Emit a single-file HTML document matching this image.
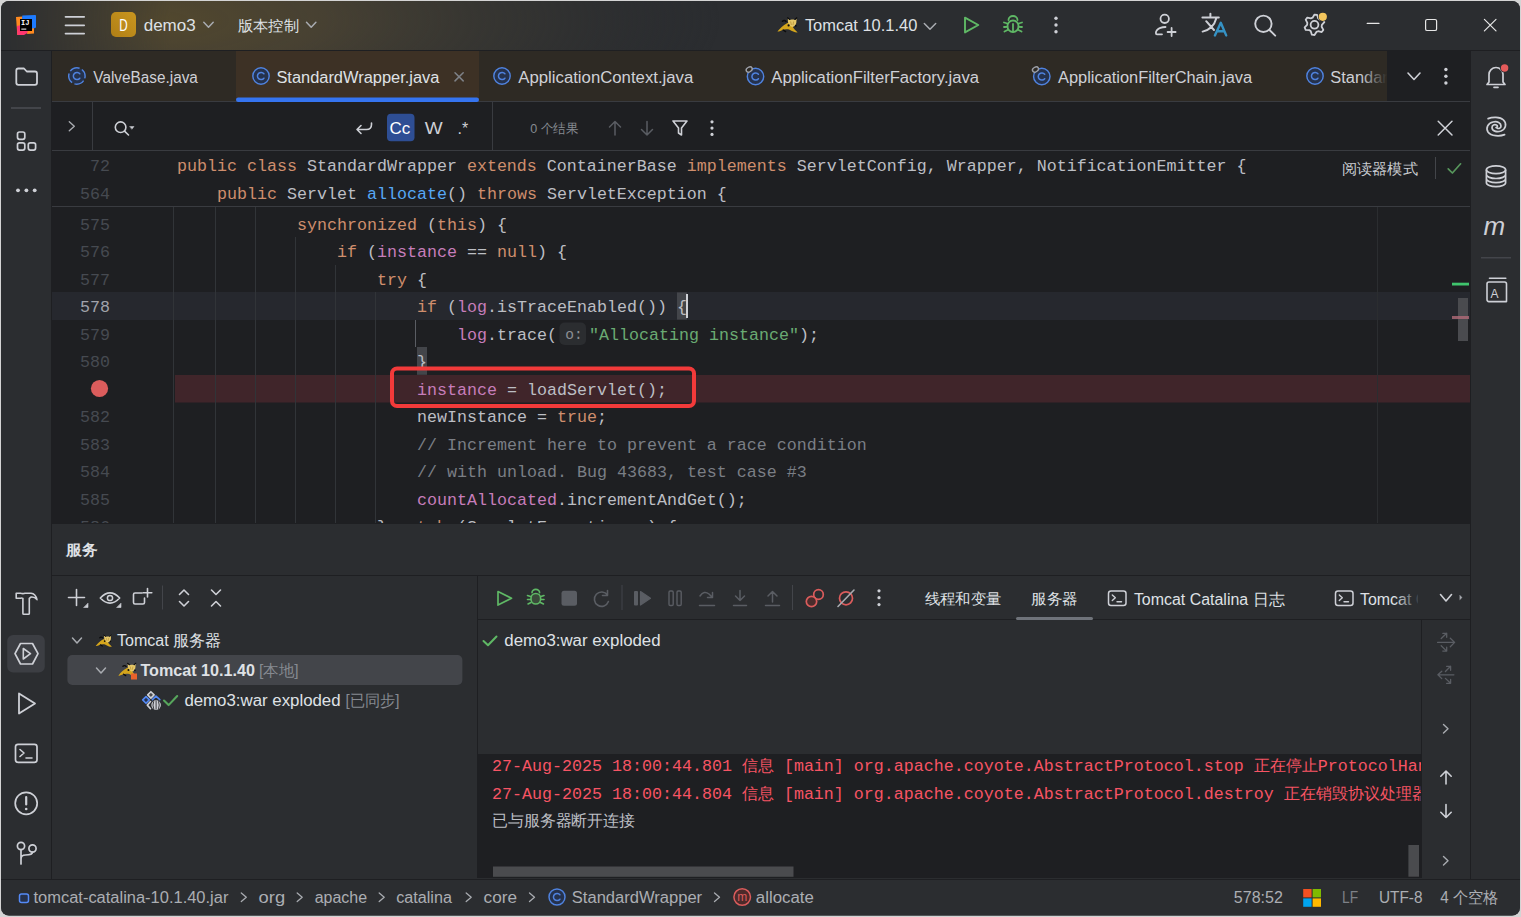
<!DOCTYPE html>
<html><head><meta charset="utf-8"><title>IntelliJ IDEA - StandardWrapper.java</title>
<style>html,body{margin:0;padding:0;background:#D4D4D4;overflow:hidden}svg{display:block}</style>
</head><body>
<svg width="1521" height="917" viewBox="0 0 1521 917">
<defs>
 <radialGradient id="proj" cx="160" cy="20" r="560" gradientUnits="userSpaceOnUse" gradientTransform="translate(160 20) scale(1 0.3) translate(-160 -20)">
  <stop offset="0" stop-color="#52482e" stop-opacity="1"/>
  <stop offset="0.3" stop-color="#4a4333" stop-opacity="0.9"/>
  <stop offset="0.65" stop-color="#3c3a33" stop-opacity="0.5"/>
  <stop offset="1" stop-color="#2B2D30" stop-opacity="0"/>
 </radialGradient>
 <linearGradient id="projmaskg" x1="0" y1="0" x2="170" y2="0" gradientUnits="userSpaceOnUse">
  <stop offset="0" stop-color="#fff" stop-opacity="0.05"/><stop offset="1" stop-color="#fff" stop-opacity="1"/>
 </linearGradient>
 <mask id="projmask" maskUnits="userSpaceOnUse" x="0" y="0" width="1521" height="50"><rect x="0" y="0" width="1521" height="50" fill="url(#projmaskg)"/></mask>
 <linearGradient id="dbadge" x1="0" y1="1" x2="1" y2="0">
  <stop offset="0" stop-color="#B07F16"/><stop offset="1" stop-color="#C9961F"/>
 </linearGradient>
 <linearGradient id="tabfade" x1="0" y1="0" x2="1" y2="0">
  <stop offset="0" stop-color="#2E2A24" stop-opacity="0"/><stop offset="1" stop-color="#2E2A24" stop-opacity="1"/>
 </linearGradient>
 <linearGradient id="tabfade2" x1="0" y1="0" x2="1" y2="0">
  <stop offset="0" stop-color="#2B2D30" stop-opacity="0"/><stop offset="1" stop-color="#2B2D30" stop-opacity="1"/>
 </linearGradient>
 <clipPath id="winclip"><rect x="1" y="1" width="1519" height="914.6" rx="8"/></clipPath>
 <clipPath id="edclip"><rect x="52" y="207" width="1418" height="316"/></clipPath>
 <clipPath id="conclip"><rect x="478" y="755" width="943" height="123"/></clipPath>
 <clipPath id="svtab"><rect x="1300" y="577" width="118" height="42"/></clipPath>
 <clipPath id="tabclip"><rect x="52" y="51" width="1335" height="50"/></clipPath>
</defs>
<g clip-path="url(#winclip)">
<rect x="0" y="0" width="1521" height="917" fill="#2B2D30" />
<rect x="0" y="0" width="1521" height="50" fill="#2B2D30" />
<rect x="0" y="0" width="1000" height="50" fill="url(#proj)" mask="url(#projmask)"/>
<rect x="0" y="50" width="1521" height="1" fill="#1E1F22" />
<rect x="51" y="51" width="1" height="864" fill="#1E1F22" />
<rect x="1470" y="51" width="1" height="828" fill="#1E1F22" />
<rect x="52" y="51" width="1418" height="50" fill="#2E2A24" />
<rect x="236" y="51" width="243" height="50" fill="#3D3125" />
<rect x="1387" y="51" width="83" height="50" fill="#1E1F22" />
<rect x="52" y="101" width="1418" height="1" fill="#393B40" />
<rect x="236" y="97.5" width="243" height="4.5" fill="#3574F0" rx="2.2" />
<rect x="52" y="102" width="1418" height="48" fill="#1E1F22" />
<rect x="52" y="150" width="1418" height="1" fill="#393B40" />
<rect x="92" y="102" width="1" height="48" fill="#393B40" />
<rect x="492" y="102" width="1" height="48" fill="#393B40" />
<rect x="52" y="151" width="1418" height="55" fill="#1E1F22" />
<rect x="52" y="206" width="1418" height="1" fill="#393B40" />
<rect x="52" y="207" width="1418" height="316" fill="#1E1F22" />
<g clip-path="url(#edclip)">
<rect x="52" y="292" width="1418" height="28" fill="#26282E" />
<rect x="175" y="375" width="1295" height="27.5" fill="#40252A" />
<rect x="1377" y="207" width="1" height="316" fill="#2B2D30" />
<rect x="173" y="207" width="1" height="316" fill="#313438" />
<rect x="215" y="207" width="1" height="316" fill="#313438" />
<rect x="255" y="207" width="1" height="316" fill="#313438" />
<rect x="295" y="237" width="1" height="286" fill="#313438" />
<rect x="335" y="265" width="1" height="258" fill="#313438" />
<rect x="375" y="292" width="1" height="231" fill="#313438" />
<rect x="415" y="320" width="1" height="27" fill="#5A5D63" />
</g>
<rect x="52" y="523" width="1418" height="1" fill="#1E1F22" />
<rect x="52" y="524" width="1418" height="354" fill="#2B2D30" />
<rect x="52" y="575" width="1418" height="1" fill="#1E1F22" />
<rect x="477" y="576" width="1" height="302" fill="#1E1F22" />
<rect x="478" y="619" width="992" height="1" fill="#1E1F22" />
<rect x="478" y="754" width="944" height="124" fill="#1E1F22" />
<rect x="1421" y="620" width="1" height="258" fill="#1E1F22" />
<rect x="0" y="879" width="1521" height="1" fill="#1E1F22" />
<rect x="0" y="880" width="1521" height="40" fill="#2B2D30" />
<rect x="111" y="12" width="25" height="25" fill="url(#dbadge)" rx="5" />
<text x="119.3" y="31.3" font-family="'Liberation Sans', sans-serif" font-size="16" fill="#FFFFFF" textLength="8.4" lengthAdjust="spacingAndGlyphs" >D</text>
<text x="143.7" y="30.7" font-family="'Liberation Sans', sans-serif" font-size="16" fill="#DFE1E5" textLength="52.0" lengthAdjust="spacingAndGlyphs" >demo3</text>
<text x="237.9" y="30.5" font-family="'Liberation Sans', sans-serif" font-size="15" fill="#DFE1E5" textLength="61.1" lengthAdjust="spacingAndGlyphs" >版本控制</text>
<text x="804.9" y="30.7" font-family="'Liberation Sans', sans-serif" font-size="16" fill="#DFE1E5" textLength="112.4" lengthAdjust="spacingAndGlyphs" >Tomcat 10.1.40</text>
<g clip-path="url(#tabclip)">
<text x="93.3" y="82.9" font-family="'Liberation Sans', sans-serif" font-size="16" fill="#CED0D6" textLength="104.6" lengthAdjust="spacingAndGlyphs" >ValveBase.java</text>
<text x="276.4" y="82.9" font-family="'Liberation Sans', sans-serif" font-size="16" fill="#DFE1E5" textLength="163.0" lengthAdjust="spacingAndGlyphs" >StandardWrapper.java</text>
<text x="518.3" y="82.9" font-family="'Liberation Sans', sans-serif" font-size="16" fill="#CED0D6" textLength="175.0" lengthAdjust="spacingAndGlyphs" >ApplicationContext.java</text>
<text x="771.3" y="82.9" font-family="'Liberation Sans', sans-serif" font-size="16" fill="#CED0D6" textLength="207.8" lengthAdjust="spacingAndGlyphs" >ApplicationFilterFactory.java</text>
<text x="1058" y="82.9" font-family="'Liberation Sans', sans-serif" font-size="16" fill="#CED0D6" textLength="194.1" lengthAdjust="spacingAndGlyphs" >ApplicationFilterChain.java</text>
<text x="1330.3" y="82.9" font-family="'Liberation Sans', sans-serif" font-size="16" fill="#CED0D6" textLength="163.0" lengthAdjust="spacingAndGlyphs" >StandardWrapper.java</text>
<rect x="1360" y="51" width="27" height="50" fill="url(#tabfade)" />
</g>
<text x="530.3" y="132.7" font-family="'Liberation Sans', sans-serif" font-size="13" fill="#868A91" textLength="48.1" lengthAdjust="spacingAndGlyphs" >0 个结果</text>
<rect x="387" y="113.7" width="27.5" height="27.5" fill="#2E4E94" rx="4" />
<text x="389.5" y="133.5" font-family="'Liberation Sans', sans-serif" font-size="17" fill="#FFFFFF" >Cc</text>
<text x="424.7" y="133.9" font-family="'Liberation Sans', sans-serif" font-size="16" fill="#CED0D6" textLength="17.9" lengthAdjust="spacingAndGlyphs" >W</text>
<text x="457.5" y="134" font-family="'Liberation Sans', sans-serif" font-size="16" fill="#CED0D6" >.*</text>
<text x="110" y="170.5" font-family="'Liberation Mono', monospace" font-size="16.667" fill="#464A51" text-anchor="end" >72</text>
<text x="177" y="170.5" font-family="'Liberation Mono', monospace" font-size="16.667" xml:space="preserve" ><tspan fill="#CF8E6D">public</tspan><tspan fill="#BCBEC4"> </tspan><tspan fill="#CF8E6D">class</tspan><tspan fill="#BCBEC4"> StandardWrapper </tspan><tspan fill="#CF8E6D">extends</tspan><tspan fill="#BCBEC4"> ContainerBase </tspan><tspan fill="#CF8E6D">implements</tspan><tspan fill="#BCBEC4"> ServletConfig, Wrapper, NotificationEmitter {</tspan></text>
<text x="110" y="198.6" font-family="'Liberation Mono', monospace" font-size="16.667" fill="#464A51" text-anchor="end" >564</text>
<text x="217" y="198.6" font-family="'Liberation Mono', monospace" font-size="16.667" xml:space="preserve" ><tspan fill="#CF8E6D">public</tspan><tspan fill="#BCBEC4"> Servlet </tspan><tspan fill="#56A8F5">allocate</tspan><tspan fill="#BCBEC4">() </tspan><tspan fill="#CF8E6D">throws</tspan><tspan fill="#BCBEC4"> ServletException {</tspan></text>
<text x="1341.8" y="174" font-family="'Liberation Sans', sans-serif" font-size="15" fill="#C9CCD1" textLength="76.0" lengthAdjust="spacingAndGlyphs" >阅读器模式</text>
<rect x="1435" y="157" width="1" height="22" fill="#43454A" />
<g clip-path="url(#edclip)">
<text x="110" y="229.8" font-family="'Liberation Mono', monospace" font-size="16.667" fill="#464A51" text-anchor="end" >575</text>
<text x="297" y="229.8" font-family="'Liberation Mono', monospace" font-size="16.667" xml:space="preserve" ><tspan fill="#CF8E6D">synchronized</tspan><tspan fill="#BCBEC4"> (</tspan><tspan fill="#CF8E6D">this</tspan><tspan fill="#BCBEC4">) {</tspan></text>
<text x="110" y="257.3" font-family="'Liberation Mono', monospace" font-size="16.667" fill="#464A51" text-anchor="end" >576</text>
<text x="337" y="257.3" font-family="'Liberation Mono', monospace" font-size="16.667" xml:space="preserve" ><tspan fill="#CF8E6D">if</tspan><tspan fill="#BCBEC4"> (</tspan><tspan fill="#C77DBB">instance</tspan><tspan fill="#BCBEC4"> == </tspan><tspan fill="#CF8E6D">null</tspan><tspan fill="#BCBEC4">) {</tspan></text>
<text x="110" y="284.8" font-family="'Liberation Mono', monospace" font-size="16.667" fill="#464A51" text-anchor="end" >577</text>
<text x="377" y="284.8" font-family="'Liberation Mono', monospace" font-size="16.667" xml:space="preserve" ><tspan fill="#CF8E6D">try</tspan><tspan fill="#BCBEC4"> {</tspan></text>
<text x="110" y="312.3" font-family="'Liberation Mono', monospace" font-size="16.667" fill="#A1A3AB" text-anchor="end" >578</text>
<text x="417" y="312.3" font-family="'Liberation Mono', monospace" font-size="16.667" xml:space="preserve" ><tspan fill="#CF8E6D">if</tspan><tspan fill="#BCBEC4"> (</tspan><tspan fill="#C77DBB">log</tspan><tspan fill="#BCBEC4">.isTraceEnabled()) {</tspan></text>
<text x="110" y="339.8" font-family="'Liberation Mono', monospace" font-size="16.667" fill="#464A51" text-anchor="end" >579</text>
<text x="457" y="339.8" font-family="'Liberation Mono', monospace" font-size="16.667" xml:space="preserve" ><tspan fill="#C77DBB">log</tspan><tspan fill="#BCBEC4">.trace(</tspan></text>
<text x="110" y="367.3" font-family="'Liberation Mono', monospace" font-size="16.667" fill="#464A51" text-anchor="end" >580</text>
<text x="417" y="367.3" font-family="'Liberation Mono', monospace" font-size="16.667" xml:space="preserve" ><tspan fill="#BCBEC4">}</tspan></text>
<text x="417" y="394.8" font-family="'Liberation Mono', monospace" font-size="16.667" xml:space="preserve" ><tspan fill="#C77DBB">instance</tspan><tspan fill="#BCBEC4"> = loadServlet();</tspan></text>
<text x="110" y="422.3" font-family="'Liberation Mono', monospace" font-size="16.667" fill="#464A51" text-anchor="end" >582</text>
<text x="417" y="422.3" font-family="'Liberation Mono', monospace" font-size="16.667" xml:space="preserve" ><tspan fill="#BCBEC4">newInstance = </tspan><tspan fill="#CF8E6D">true</tspan><tspan fill="#BCBEC4">;</tspan></text>
<text x="110" y="449.8" font-family="'Liberation Mono', monospace" font-size="16.667" fill="#464A51" text-anchor="end" >583</text>
<text x="417" y="449.8" font-family="'Liberation Mono', monospace" font-size="16.667" xml:space="preserve" ><tspan fill="#7A7E85">// Increment here to prevent a race condition</tspan></text>
<text x="110" y="477.3" font-family="'Liberation Mono', monospace" font-size="16.667" fill="#464A51" text-anchor="end" >584</text>
<text x="417" y="477.3" font-family="'Liberation Mono', monospace" font-size="16.667" xml:space="preserve" ><tspan fill="#7A7E85">// with unload. Bug 43683, test case #3</tspan></text>
<text x="110" y="504.8" font-family="'Liberation Mono', monospace" font-size="16.667" fill="#464A51" text-anchor="end" >585</text>
<text x="417" y="504.8" font-family="'Liberation Mono', monospace" font-size="16.667" xml:space="preserve" ><tspan fill="#C77DBB">countAllocated</tspan><tspan fill="#BCBEC4">.incrementAndGet();</tspan></text>
<text x="110" y="532.3" font-family="'Liberation Mono', monospace" font-size="16.667" fill="#464A51" text-anchor="end" >586</text>
<text x="377" y="532.3" font-family="'Liberation Mono', monospace" font-size="16.667" xml:space="preserve" ><tspan fill="#BCBEC4">} </tspan><tspan fill="#CF8E6D">catch</tspan><tspan fill="#BCBEC4"> (ServletException e) {</tspan></text>
<rect x="677" y="292.4" width="10" height="27.2" fill="#43454A" />
<rect x="417" y="347" width="10" height="27.8" fill="#43454A" />
</g>
<text x="677" y="312.3" font-family="'Liberation Mono', monospace" font-size="16.667" xml:space="preserve" ><tspan fill="#BCBEC4">{</tspan></text>
<text x="417" y="367.3" font-family="'Liberation Mono', monospace" font-size="16.667" xml:space="preserve" ><tspan fill="#BCBEC4">}</tspan></text>
<rect x="686" y="294" width="2" height="24" fill="#CED0D6" />
<rect x="559.5" y="322.5" width="26.5" height="22.5" fill="#2B2D30" rx="5" />
<text x="565.2" y="339" font-family="'Liberation Mono', monospace" font-size="14.5" fill="#8C8F94" >o:</text>
<text x="589" y="339.8" font-family="'Liberation Mono', monospace" font-size="16.667" xml:space="preserve" ><tspan fill="#6AAB73">"Allocating instance"</tspan><tspan fill="#BCBEC4">);</tspan></text>
<circle cx="99.5" cy="388.5" r="8.6" fill="#DB5C5C" stroke="none" stroke-width="1.5" />
<rect x="392" y="368.5" width="302" height="37.5" rx="5" fill="none" stroke="#F23A3A" stroke-width="4"/>
<rect x="1452" y="282.7" width="17" height="2.8" fill="#3FC46D" />
<rect x="1458" y="298" width="10" height="43" fill="#4A4B4F" />
<rect x="1452" y="316" width="17" height="3" fill="#B06A78" opacity="0.8"/>
<text x="66.1" y="554.8" font-family="'Liberation Sans', sans-serif" font-size="15" fill="#DFE1E5" font-weight="700" textLength="31.2" lengthAdjust="spacingAndGlyphs" >服务</text>
<text x="117" y="646.2" font-family="'Liberation Sans', sans-serif" font-size="16" fill="#DFE1E5" textLength="104.3" lengthAdjust="spacingAndGlyphs" >Tomcat 服务器</text>
<rect x="67.4" y="655" width="395" height="30" fill="#43454A" rx="5" />
<text x="140.4" y="675.5" font-family="'Liberation Sans', sans-serif" font-size="16" fill="#DFE1E5" font-weight="700" textLength="114.6" lengthAdjust="spacingAndGlyphs" >Tomcat 10.1.40</text>
<text x="259" y="675.5" font-family="'Liberation Sans', sans-serif" font-size="16" fill="#868A91" textLength="39.6" lengthAdjust="spacingAndGlyphs" >[本地]</text>
<text x="184.4" y="705.6" font-family="'Liberation Sans', sans-serif" font-size="16" fill="#DFE1E5" textLength="156.2" lengthAdjust="spacingAndGlyphs" >demo3:war exploded</text>
<text x="345.4" y="705.6" font-family="'Liberation Sans', sans-serif" font-size="16" fill="#868A91" textLength="54.0" lengthAdjust="spacingAndGlyphs" >[已同步]</text>
<text x="504.3" y="646.2" font-family="'Liberation Sans', sans-serif" font-size="16" fill="#DFE1E5" textLength="156.3" lengthAdjust="spacingAndGlyphs" >demo3:war exploded</text>
<text x="924.7" y="604" font-family="'Liberation Sans', sans-serif" font-size="15" fill="#DFE1E5" textLength="76.9" lengthAdjust="spacingAndGlyphs" >线程和变量</text>
<text x="1031" y="604" font-family="'Liberation Sans', sans-serif" font-size="15" fill="#DFE1E5" textLength="46.6" lengthAdjust="spacingAndGlyphs" >服务器</text>
<rect x="1016" y="617" width="77" height="3" fill="#6F737A" rx="1.5" />
<text x="1133.9" y="604.5" font-family="'Liberation Sans', sans-serif" font-size="16" fill="#DFE1E5" textLength="150.6" lengthAdjust="spacingAndGlyphs" >Tomcat Catalina 日志</text>
<g clip-path="url(#svtab)">
<text x="1360" y="604.5" font-family="'Liberation Sans', sans-serif" font-size="16" fill="#DFE1E5" textLength="150.6" lengthAdjust="spacingAndGlyphs" >Tomcat Catalina 日志</text>
</g>
<rect x="1395" y="577" width="26" height="42" fill="url(#tabfade2)" />
<rect x="1421" y="577" width="49" height="42" fill="#2B2D30" />
<g clip-path="url(#conclip)">
<text x="492" y="771" font-family="'Liberation Mono', monospace" font-size="16.667" fill="#F75464" xml:space="preserve">27-Aug-2025 18:00:44.801 <tspan font-size="16.25">信息</tspan> [main] org.apache.coyote.AbstractProtocol.stop <tspan font-size="16.25">正在停止</tspan>ProtocolHandler</text>
<text x="492" y="798.5" font-family="'Liberation Mono', monospace" font-size="16.667" fill="#F75464" xml:space="preserve">27-Aug-2025 18:00:44.804 <tspan font-size="16.25">信息</tspan> [main] org.apache.coyote.AbstractProtocol.destroy <tspan font-size="16.25">正在销毁协议处理器</tspan></text>
<text x="492" y="826" font-family="'Liberation Mono', monospace" font-size="16" fill="#BCBEC4" textLength="143" lengthAdjust="spacing" >已与服务器断开连接</text>
<rect x="493" y="866.5" width="300.5" height="10.3" fill="#4A4B4E" />
<rect x="1408.4" y="845" width="10.6" height="31.7" fill="#4A4B4E" />
</g>
<text x="33.5" y="902.6" font-family="'Liberation Sans', sans-serif" font-size="16" fill="#ABAEB3" textLength="194.9" lengthAdjust="spacingAndGlyphs" >tomcat-catalina-10.1.40.jar</text>
<text x="258.6" y="902.6" font-family="'Liberation Sans', sans-serif" font-size="16" fill="#ABAEB3" textLength="26.5" lengthAdjust="spacingAndGlyphs" >org</text>
<text x="314.7" y="902.6" font-family="'Liberation Sans', sans-serif" font-size="16" fill="#ABAEB3" textLength="52.4" lengthAdjust="spacingAndGlyphs" >apache</text>
<text x="396.2" y="902.6" font-family="'Liberation Sans', sans-serif" font-size="16" fill="#ABAEB3" textLength="55.7" lengthAdjust="spacingAndGlyphs" >catalina</text>
<text x="483.6" y="902.6" font-family="'Liberation Sans', sans-serif" font-size="16" fill="#ABAEB3" textLength="33.4" lengthAdjust="spacingAndGlyphs" >core</text>
<text x="571.8" y="902.6" font-family="'Liberation Sans', sans-serif" font-size="16" fill="#ABAEB3" textLength="130.3" lengthAdjust="spacingAndGlyphs" >StandardWrapper</text>
<text x="755.8" y="902.6" font-family="'Liberation Sans', sans-serif" font-size="16" fill="#ABAEB3" textLength="58.0" lengthAdjust="spacingAndGlyphs" >allocate</text>
<text x="1233.8" y="902.7" font-family="'Liberation Sans', sans-serif" font-size="16" fill="#ABAEB3" textLength="49.1" lengthAdjust="spacingAndGlyphs" >578:52</text>
<text x="1342" y="902.7" font-family="'Liberation Sans', sans-serif" font-size="16" fill="#7E8187" textLength="16.1" lengthAdjust="spacingAndGlyphs" >LF</text>
<text x="1379" y="902.7" font-family="'Liberation Sans', sans-serif" font-size="16" fill="#ABAEB3" textLength="43.5" lengthAdjust="spacingAndGlyphs" >UTF-8</text>
<text x="1440.3" y="902.7" font-family="'Liberation Sans', sans-serif" font-size="16" fill="#ABAEB3" textLength="58.3" lengthAdjust="spacingAndGlyphs" >4 个空格</text>
<g><path d="M16 17 L22.5 16.5 L22 34.5 L17.3 35 Z" fill="#FF8A1F"/><path d="M22.3 15.5 L35.2 14.9 Q36 14.9 36 15.8 L36 27.5 L29.5 30.5 L22 22 Z" fill="#1E7BFF"/><path d="M17.3 35 L17 26 L26 24 L31 31 L24 35 Z" fill="#FF3670"/><path d="M28 30 L34 28 L34 33.5 L27 34 Z" fill="#FF8A1F"/><rect x="20" y="19" width="12" height="12" fill="#000"/><text x="21" y="25.2" font-family="'Liberation Mono', monospace" font-size="7" font-weight="700" fill="#fff">IJ</text><rect x="21.3" y="28.6" width="5" height="1" fill="#fff"/></g>
<path d="M65.5 16.8 L84.2 16.8" stroke="#CED0D6" stroke-width="1.7" fill="none" stroke-linecap="round" stroke-linejoin="round" />
<path d="M65.5 25.3 L84.2 25.3" stroke="#CED0D6" stroke-width="1.7" fill="none" stroke-linecap="round" stroke-linejoin="round" />
<path d="M65.5 33.6 L84.2 33.6" stroke="#CED0D6" stroke-width="1.7" fill="none" stroke-linecap="round" stroke-linejoin="round" />
<path d="M203.8 22.3 L208.5 27.3 L213.2 22.3" stroke="#A8ABB0" stroke-width="1.5" fill="none" stroke-linecap="round" stroke-linejoin="round" />
<path d="M306.5 22.3 L311.2 27.3 L315.9 22.3" stroke="#A8ABB0" stroke-width="1.5" fill="none" stroke-linecap="round" stroke-linejoin="round" />
<g transform="translate(774 14) scale(1.0)"><path d="M8.5 7.2 C9.5 6.2 11 6.2 12 7.4" stroke="#0c0c0c" stroke-width="1.6" fill="none" stroke-linecap="round"/><path d="M3.4 17.6 C6 14.2 9 11.2 13 9.2 C15.5 8.3 17.2 10.2 18.3 12.3 C19.8 14.8 21.8 16.8 23.6 18.4 C21 18.6 18 17.3 15.6 15.8 C13 15 10.2 15.4 8 16.2 C6.4 16.8 5 17.6 3.4 17.6 Z" fill="#D4A51C"/><path d="M9.2 16 L11.6 17.6" stroke="#0c0c0c" stroke-width="1.4" fill="none" stroke-linecap="round"/><path d="M13.8 4.4 L15.6 6 L17.6 5.6 L19.6 5.6 L21.2 6 L22.6 4.4 L22.3 9 C21.6 11.6 19.6 13.1 18.3 13.1 C16.6 12.6 14.6 10.6 14 8.2 Z" fill="#E6C868"/><path d="M13.6 3.8 L15.6 5.4 M22.8 3.8 L21 5.4" stroke="#0c0c0c" stroke-width="1.2" stroke-linecap="round"/><circle cx="14.6" cy="11.4" r="1.1" fill="#0c0c0c"/><circle cx="21.8" cy="11.8" r="0.9" fill="#0c0c0c"/><path d="M16.6 7.5 L17.4 11 M19.6 7.5 L19 11" stroke="#B89338" stroke-width="0.8"/></g>
<path d="M924.3 23.5 L930.0 29.2 L935.7 23.5" stroke="#A8ABB0" stroke-width="1.5" fill="none" stroke-linecap="round" stroke-linejoin="round" />
<path d="M965 17.6 L978.3 25 L965 32.4 Z" stroke="#5FB865" stroke-width="1.9" fill="none" stroke-linecap="round" stroke-linejoin="round" />
<g stroke="#5FB865" stroke-width="1.8" fill="none" stroke-linecap="round"><path d="M1008.5 20 A4.5 4 0 0 1 1017.5 20"/><rect x="1007.5" y="20.5" width="11" height="11.5" rx="5.5"/><path d="M1004 22.5 L1007.5 23.5 M1004 27 L1007.5 26.8 M1004.5 31.5 L1008 29.7 M1022 22.5 L1018.5 23.5 M1022 27 L1018.5 26.8 M1021.5 31.5 L1018 29.7 M1013 24 L1013 31.5"/></g>
<circle cx="1056" cy="18.3" r="1.7" fill="#CED0D6" stroke="none" stroke-width="1.5" />
<circle cx="1056" cy="25" r="1.7" fill="#CED0D6" stroke="none" stroke-width="1.5" />
<circle cx="1056" cy="31.7" r="1.7" fill="#CED0D6" stroke="none" stroke-width="1.5" />
<circle cx="1164.7" cy="18.8" r="4.2" fill="none" stroke="#CED0D6" stroke-width="1.8" />
<path d="M1157 34.3 L1162 34.3 M1157 34.3 C1155.5 34.3 1155.5 32 1157 30.2 C1158.8 28 1161.5 27 1165.5 27" stroke="#CED0D6" stroke-width="1.8" fill="none" stroke-linecap="round" stroke-linejoin="round" />
<path d="M1171.6 28 L1171.6 36 M1167.6 32 L1175.6 32" stroke="#CED0D6" stroke-width="1.8" fill="none" stroke-linecap="round" stroke-linejoin="round" />
<path d="M1210.4 13.8 L1210.4 16 M1202.4 17.5 L1218.8 17.5 M1206.2 21.2 L1214 30 M1216.3 18.2 C1214.5 25 1210 29.8 1202.6 31.6" stroke="#CED0D6" stroke-width="2" fill="none" stroke-linecap="round" stroke-linejoin="round" />
<path d="M1214.9 35.4 L1220.8 22.8 L1226.2 35.4 M1217 31.2 L1224.4 31.2" stroke="#3592C4" stroke-width="2.4" fill="none" stroke-linecap="round" stroke-linejoin="round" stroke-linecap="butt" stroke-linejoin="miter"/>
<circle cx="1263.4" cy="23.8" r="8.2" fill="none" stroke="#CED0D6" stroke-width="1.9" />
<path d="M1269.5 30 L1275.2 35.7" stroke="#CED0D6" stroke-width="1.9" fill="none" stroke-linecap="round" stroke-linejoin="round" />
<path d="M1314.50 14.60 L1317.14 14.95 L1318.20 18.39 L1319.73 19.57 L1323.33 19.70 L1324.35 22.16 L1321.90 24.80 L1321.65 26.72 L1323.33 29.90 L1321.71 32.01 L1318.20 31.21 L1316.42 31.95 L1314.50 35.00 L1311.86 34.65 L1310.80 31.21 L1309.27 30.03 L1305.67 29.90 L1304.65 27.44 L1307.10 24.80 L1307.35 22.88 L1305.67 19.70 L1307.29 17.59 L1310.80 18.39 L1312.58 17.65 Z" stroke="#CED0D6" stroke-width="1.8" fill="none" stroke-linecap="round" stroke-linejoin="round" />
<circle cx="1314.5" cy="24.8" r="3.9" fill="none" stroke="#CED0D6" stroke-width="1.8" />
<circle cx="1322.8" cy="16.8" r="4.8" fill="#2B2D30" stroke="none" stroke-width="1.5" />
<circle cx="1322.8" cy="16.8" r="4.1" fill="#F2C55C" stroke="none" stroke-width="1.5" />
<path d="M1367.2 23.4 L1379 23.4" stroke="#E6E6E6" stroke-width="1.2" fill="none" stroke-linecap="round" stroke-linejoin="round" />
<rect x="1425.6" y="19.5" width="11" height="11" rx="1.6" fill="none" stroke="#E6E6E6" stroke-width="1.2"/>
<path d="M1484.4 19.3 L1496 30.9 M1496 19.3 L1484.4 30.9" stroke="#E6E6E6" stroke-width="1.2" fill="none" stroke-linecap="round" stroke-linejoin="round" />
<path d="M16.3 70.5 Q16.3 68.5 18.3 68.5 L24 68.5 L26.8 71.5 L35 71.5 Q37 71.5 37 73.5 L37 82.8 Q37 84.8 35 84.8 L18.3 84.8 Q16.3 84.8 16.3 82.8 Z" stroke="#CED0D6" stroke-width="1.8" fill="none" stroke-linecap="round" stroke-linejoin="round" />
<rect x="11" y="107" width="30" height="2" fill="#43454A" />
<rect x="17.5" y="132" width="7.3" height="7.3" rx="2" fill="none" stroke="#CED0D6" stroke-width="1.7"/>
<rect x="17.5" y="142.8" width="7.3" height="7.3" rx="2" fill="none" stroke="#CED0D6" stroke-width="1.7"/>
<rect x="28.3" y="142.8" width="7.3" height="7.3" rx="2" fill="none" stroke="#CED0D6" stroke-width="1.7"/>
<circle cx="18" cy="190.3" r="1.9" fill="#CED0D6" stroke="none" stroke-width="1.5" />
<circle cx="26.4" cy="190.3" r="1.9" fill="#CED0D6" stroke="none" stroke-width="1.5" />
<circle cx="34.7" cy="190.3" r="1.9" fill="#CED0D6" stroke="none" stroke-width="1.5" />
<circle cx="76.9" cy="76" r="8.2" fill="#25324D" stroke="#4F82DE" stroke-width="1.45" stroke-dasharray="10.3 2.6" stroke-dashoffset="-5"/>
<path d="M79.80000000000001 73.8 A3.6 3.6 0 1 0 79.80000000000001 78.2" stroke="#4F82DE" stroke-width="1.5" fill="none" stroke-linecap="round" stroke-linejoin="round" />
<circle cx="261" cy="76" r="8.2" fill="#25324D" stroke="#4F82DE" stroke-width="1.45" />
<path d="M263.9 73.8 A3.6 3.6 0 1 0 263.9 78.2" stroke="#4F82DE" stroke-width="1.5" fill="none" stroke-linecap="round" stroke-linejoin="round" />
<circle cx="502" cy="76" r="8.2" fill="#25324D" stroke="#4F82DE" stroke-width="1.45" />
<path d="M504.9 73.8 A3.6 3.6 0 1 0 504.9 78.2" stroke="#4F82DE" stroke-width="1.5" fill="none" stroke-linecap="round" stroke-linejoin="round" />
<circle cx="755.5" cy="76.5" r="8.2" fill="#25324D" stroke="#4F82DE" stroke-width="1.45" />
<path d="M758.4 74.3 A3.6 3.6 0 1 0 758.4 78.7" stroke="#4F82DE" stroke-width="1.5" fill="none" stroke-linecap="round" stroke-linejoin="round" />
<ellipse cx="749.2" cy="69.5" rx="3.2" ry="2.3" transform="rotate(-30 749.2 69.5)" fill="#2E2A24" stroke="#9DA0A8" stroke-width="1.4"/>
<circle cx="1041.8" cy="76.5" r="8.2" fill="#25324D" stroke="#4F82DE" stroke-width="1.45" />
<path d="M1044.7 74.3 A3.6 3.6 0 1 0 1044.7 78.7" stroke="#4F82DE" stroke-width="1.5" fill="none" stroke-linecap="round" stroke-linejoin="round" />
<ellipse cx="1035.5" cy="69.5" rx="3.2" ry="2.3" transform="rotate(-30 1035.5 69.5)" fill="#2E2A24" stroke="#9DA0A8" stroke-width="1.4"/>
<circle cx="1315" cy="76" r="8.2" fill="#25324D" stroke="#4F82DE" stroke-width="1.45" />
<path d="M1317.9 73.8 A3.6 3.6 0 1 0 1317.9 78.2" stroke="#4F82DE" stroke-width="1.5" fill="none" stroke-linecap="round" stroke-linejoin="round" />
<path d="M455 72.7 L463.2 80.9 M463.2 72.7 L455 80.9" stroke="#7E8187" stroke-width="1.5" fill="none" stroke-linecap="round" stroke-linejoin="round" />
<path d="M1408 73 L1414.0 79.5 L1420 73" stroke="#CED0D6" stroke-width="1.6" fill="none" stroke-linecap="round" stroke-linejoin="round" />
<circle cx="1445.9" cy="69.5" r="1.7" fill="#CED0D6" stroke="none" stroke-width="1.5" />
<circle cx="1445.9" cy="76.3" r="1.7" fill="#CED0D6" stroke="none" stroke-width="1.5" />
<circle cx="1445.9" cy="83" r="1.7" fill="#CED0D6" stroke="none" stroke-width="1.5" />
<path d="M1489 82 L1489 74.5 A7 7 0 0 1 1503 74.5 L1503 82 L1505 84.5 L1487 84.5 Z" stroke="#CED0D6" stroke-width="1.7" fill="none" stroke-linecap="round" stroke-linejoin="round" />
<path d="M1494 87.3 L1498 87.3" stroke="#CED0D6" stroke-width="1.7" fill="none" stroke-linecap="round" stroke-linejoin="round" />
<circle cx="1504.6" cy="68" r="4.6" fill="#2B2D30" stroke="none" stroke-width="1.5" />
<circle cx="1504.6" cy="68" r="3.7" fill="#E55B5B" stroke="none" stroke-width="1.5" />
<path d="M1488.1 118.6 C1492 117 1500 116.5 1503.5 120 C1507 123.5 1506 129 1501 131 C1496.5 132.5 1492 131 1492 127.5 C1492 125 1494.5 124 1496.5 125 C1498 125.7 1497.5 127.5 1496 127.5" stroke="#CED0D6" stroke-width="1.7" fill="none" stroke-linecap="round" stroke-linejoin="round" />
<path d="M1504.6 134.6 C1500 136.5 1491 136.5 1488 132 C1485.5 128 1488 123 1493 122 C1497.5 121 1501 123 1501 126 C1501 128.5 1498.5 129 1497 128" stroke="#CED0D6" stroke-width="1.7" fill="none" stroke-linecap="round" stroke-linejoin="round" />
<g fill="none" stroke="#CED0D6" stroke-width="1.7"><ellipse cx="1496" cy="169.8" rx="9.6" ry="3.9"/><path d="M1486.4 169.8 L1486.4 182.8 A9.6 3.9 0 0 0 1505.6 182.8 L1505.6 169.8 M1486.4 174.6 A9.6 3.9 0 0 0 1505.6 174.6 M1486.4 178.8 A9.6 3.9 0 0 0 1505.6 178.8"/></g>
<text x="1483.5" y="235" font-family="'Liberation Sans', sans-serif" font-size="26" fill="#CED0D6" font-style="italic">m</text>
<rect x="1481" y="257" width="30" height="1.5" fill="#43454A" />
<path d="M1489.5 278.3 L1505.8 278.3 M1489 282 L1504.5 282 Q1506.5 282 1506.5 284 L1506.5 301.6 L1489 301.6 Q1487 301.6 1487 299.6 L1487 284 Q1487 282 1489 282" stroke="#CED0D6" stroke-width="1.6" fill="none" stroke-linecap="round" stroke-linejoin="round" />
<text x="1490.5" y="297.5" font-family="'Liberation Sans', sans-serif" font-size="12" fill="#CED0D6" >A</text>
<path d="M69.3 121.8 L74.3 126.30000000000001 L69.3 130.8" stroke="#A8ABB0" stroke-width="1.4" fill="none" stroke-linecap="round" stroke-linejoin="round" />
<circle cx="120.6" cy="127.2" r="5.3" fill="none" stroke="#CED0D6" stroke-width="1.6" />
<path d="M124.5 131.2 L128.5 135" stroke="#CED0D6" stroke-width="1.6" fill="none" stroke-linecap="round" stroke-linejoin="round" />
<path d="M130 126.5 L134 126.5 L132 129 Z" stroke="#CED0D6" stroke-width="0.5" fill="#CED0D6" stroke-linecap="round" stroke-linejoin="round" />
<path d="M371.5 123 L371.5 124.5 Q371.5 129.5 366.5 129.5 L357 129.5 M361 125.5 L357 129.5 L361 133.5" stroke="#CED0D6" stroke-width="1.6" fill="none" stroke-linecap="round" stroke-linejoin="round" />
<path d="M615 121.5 L615 135 M609.5 127 L615 121.5 L620.5 127" stroke="#5A5D63" stroke-width="1.5" fill="none" stroke-linecap="round" stroke-linejoin="round" />
<path d="M647 121.5 L647 135 M641.5 129.5 L647 135 L652.5 129.5" stroke="#5A5D63" stroke-width="1.5" fill="none" stroke-linecap="round" stroke-linejoin="round" />
<path d="M673 121 L687 121 L681.5 128 L681.5 135 L678.5 133 L678.5 128 Z" stroke="#CED0D6" stroke-width="1.6" fill="none" stroke-linecap="round" stroke-linejoin="round" />
<circle cx="712" cy="121.8" r="1.6" fill="#CED0D6" stroke="none" stroke-width="1.5" />
<circle cx="712" cy="128.1" r="1.6" fill="#CED0D6" stroke="none" stroke-width="1.5" />
<circle cx="712" cy="134.4" r="1.6" fill="#CED0D6" stroke="none" stroke-width="1.5" />
<path d="M1438.2 121.2 L1452 135 M1452 121.2 L1438.2 135" stroke="#CED0D6" stroke-width="1.5" fill="none" stroke-linecap="round" stroke-linejoin="round" />
<path d="M1448.2 168.8 L1452.4 173 L1460.6 163.8" stroke="#57965C" stroke-width="1.7" fill="none" stroke-linecap="round" stroke-linejoin="round" />
<path d="M76.5 589.5 L76.5 605.5 M68.5 597.5 L84.5 597.5" stroke="#CED0D6" stroke-width="1.6" fill="none" stroke-linecap="round" stroke-linejoin="round" />
<path d="M84 607.5 L88 607.5 L88 603.5 Z" stroke="#CED0D6" stroke-width="0.6" fill="#CED0D6" stroke-linecap="round" stroke-linejoin="round" />
<path d="M100.3 598 Q110 587.8 119.7 598 Q110 608.2 100.3 598 Z" stroke="#CED0D6" stroke-width="1.6" fill="none" stroke-linecap="round" stroke-linejoin="round" />
<circle cx="110" cy="598" r="2.6" fill="none" stroke="#CED0D6" stroke-width="1.5" />
<path d="M117 607.5 L121 607.5 L121 603.5 Z" stroke="#CED0D6" stroke-width="0.6" fill="#CED0D6" stroke-linecap="round" stroke-linejoin="round" />
<path d="M142 593 L135 593 Q133.5 593 133.5 594.5 L133.5 602.5 Q133.5 604 135 604 L143 604 Q144.5 604 144.5 602.5 L144.5 598 M147.5 588.5 L147.5 597 M143.2 592.7 L151.8 592.7" stroke="#CED0D6" stroke-width="1.6" fill="none" stroke-linecap="round" stroke-linejoin="round" />
<rect x="162" y="585.5" width="1" height="24" fill="#43454A" />
<path d="M179.5 594.5 L184 590 L188.5 594.5 M179.5 601.5 L184 606 L188.5 601.5" stroke="#CED0D6" stroke-width="1.6" fill="none" stroke-linecap="round" stroke-linejoin="round" />
<path d="M211.5 590 L216 594.5 L220.5 590 M211.5 606 L216 601.5 L220.5 606" stroke="#CED0D6" stroke-width="1.6" fill="none" stroke-linecap="round" stroke-linejoin="round" />
<path d="M72.5 638 L77.0 643 L81.5 638" stroke="#A8ABB0" stroke-width="1.5" fill="none" stroke-linecap="round" stroke-linejoin="round" />
<g transform="translate(93 632) scale(0.8)"><path d="M8.5 7.2 C9.5 6.2 11 6.2 12 7.4" stroke="#0c0c0c" stroke-width="1.6" fill="none" stroke-linecap="round"/><path d="M3.4 17.6 C6 14.2 9 11.2 13 9.2 C15.5 8.3 17.2 10.2 18.3 12.3 C19.8 14.8 21.8 16.8 23.6 18.4 C21 18.6 18 17.3 15.6 15.8 C13 15 10.2 15.4 8 16.2 C6.4 16.8 5 17.6 3.4 17.6 Z" fill="#D4A51C"/><path d="M9.2 16 L11.6 17.6" stroke="#0c0c0c" stroke-width="1.4" fill="none" stroke-linecap="round"/><path d="M13.8 4.4 L15.6 6 L17.6 5.6 L19.6 5.6 L21.2 6 L22.6 4.4 L22.3 9 C21.6 11.6 19.6 13.1 18.3 13.1 C16.6 12.6 14.6 10.6 14 8.2 Z" fill="#E6C868"/><path d="M13.6 3.8 L15.6 5.4 M22.8 3.8 L21 5.4" stroke="#0c0c0c" stroke-width="1.2" stroke-linecap="round"/><circle cx="14.6" cy="11.4" r="1.1" fill="#0c0c0c"/><circle cx="21.8" cy="11.8" r="0.9" fill="#0c0c0c"/><path d="M16.6 7.5 L17.4 11 M19.6 7.5 L19 11" stroke="#B89338" stroke-width="0.8"/></g>
<path d="M96.5 668 L101.0 673 L105.5 668" stroke="#A8ABB0" stroke-width="1.5" fill="none" stroke-linecap="round" stroke-linejoin="round" />
<g transform="translate(115.3 659.8) scale(0.9)"><path d="M8.5 7.2 C9.5 6.2 11 6.2 12 7.4" stroke="#0c0c0c" stroke-width="1.6" fill="none" stroke-linecap="round"/><path d="M3.4 17.6 C6 14.2 9 11.2 13 9.2 C15.5 8.3 17.2 10.2 18.3 12.3 C19.8 14.8 21.8 16.8 23.6 18.4 C21 18.6 18 17.3 15.6 15.8 C13 15 10.2 15.4 8 16.2 C6.4 16.8 5 17.6 3.4 17.6 Z" fill="#D4A51C"/><path d="M9.2 16 L11.6 17.6" stroke="#0c0c0c" stroke-width="1.4" fill="none" stroke-linecap="round"/><path d="M13.8 4.4 L15.6 6 L17.6 5.6 L19.6 5.6 L21.2 6 L22.6 4.4 L22.3 9 C21.6 11.6 19.6 13.1 18.3 13.1 C16.6 12.6 14.6 10.6 14 8.2 Z" fill="#E6C868"/><path d="M13.6 3.8 L15.6 5.4 M22.8 3.8 L21 5.4" stroke="#0c0c0c" stroke-width="1.2" stroke-linecap="round"/><circle cx="14.6" cy="11.4" r="1.1" fill="#0c0c0c"/><circle cx="21.8" cy="11.8" r="0.9" fill="#0c0c0c"/><path d="M16.6 7.5 L17.4 11 M19.6 7.5 L19 11" stroke="#B89338" stroke-width="0.8"/></g>
<rect x="131" y="673.5" width="6" height="6" fill="#E8622C" />
<g stroke-width="1.6" stroke-linejoin="round" stroke-linecap="round"><path d="M150.9 691.7 L154.1 694.9 L150.9 698.1 L147.7 694.9 Z" stroke="#CED0D6" fill="#4A4B4E"/><path d="M146 696.6 L149.3 699.9 L146 703.2 L142.7 699.9 Z" stroke="#548AF7" fill="#25324D"/><path d="M152.4 699.6 L156 696.2 L159.8 699.6" stroke="#548AF7" fill="none"/><path d="M150.5 701.5 L147.3 705.1 L150.5 708.7" stroke="#CED0D6" fill="none"/><circle cx="156.1" cy="705.1" r="4.8" fill="#CED0D6" stroke="none"/><path d="M156.1 701 L156.1 709.2 M153.6 701.6 Q152.2 705.1 153.6 708.6 M158.6 701.6 Q160 705.1 158.6 708.6" stroke="#2B2D30" stroke-width="0.9" fill="none"/></g>
<path d="M164 700.6 L168.6 705.1 L177.2 696" stroke="#57A65C" stroke-width="2.1" fill="none" stroke-linecap="round" stroke-linejoin="round" />
<path d="M498 591.5 L511.5 598.3 L498 605 Z" stroke="#5FB865" stroke-width="1.7" fill="none" stroke-linecap="round" stroke-linejoin="round" />
<g stroke="#5FB865" stroke-width="1.6" fill="none" stroke-linecap="round"><path d="M532 592.8 A3.8 3.4 0 0 1 539.6 592.8"/><rect x="531" y="593.5" width="9.6" height="10.5" rx="4.8" fill="#3a4a3a"/><path d="M527.5 595.5 L530.5 596.5 M527.5 599.5 L530.5 599.5 M528 604 L531 602.5 M544 595.5 L541 596.5 M544 599.5 L541 599.5 M543.5 604 L540.5 602.5"/></g>
<rect x="561.5" y="590.8" width="15.5" height="15" fill="#5A5D63" rx="2.5" />
<path d="M607.5 595 A7.2 7.2 0 1 0 608.4 601.5 M607.5 590.5 L607.5 595.5 L602.5 595.5" stroke="#5A5D63" stroke-width="1.6" fill="none" stroke-linecap="round" stroke-linejoin="round" />
<rect x="621.5" y="585" width="1" height="25" fill="#43454A" />
<rect x="634" y="591" width="4" height="14.5" fill="#5A5D63" rx="1" />
<path d="M640.5 591.5 L650.5 598.3 L640.5 605 Z" stroke="#5A5D63" stroke-width="1.2" fill="#5A5D63" stroke-linecap="round" stroke-linejoin="round" />
<rect x="669" y="591" width="4.2" height="14.5" rx="1.2" fill="none" stroke="#5A5D63" stroke-width="1.4"/>
<rect x="677" y="591" width="4.2" height="14.5" rx="1.2" fill="none" stroke="#5A5D63" stroke-width="1.4"/>
<path d="M700 596 Q704 590 709 594 L712.5 597.5 M712.5 592.5 L712.5 597.5 L707.5 597.5 M699.5 605.5 L714.5 605.5" stroke="#5A5D63" stroke-width="1.5" fill="none" stroke-linecap="round" stroke-linejoin="round" />
<path d="M740 590.5 L740 600.5 M735.5 596 L740 600.5 L744.5 596 M733.5 605.5 L746.5 605.5" stroke="#5A5D63" stroke-width="1.5" fill="none" stroke-linecap="round" stroke-linejoin="round" />
<path d="M772.5 602 L772.5 591.5 M768 596 L772.5 591.5 L777 596 M765.5 605.5 L779.5 605.5" stroke="#5A5D63" stroke-width="1.5" fill="none" stroke-linecap="round" stroke-linejoin="round" />
<rect x="792" y="585" width="1" height="25" fill="#43454A" />
<circle cx="818.5" cy="594.5" r="4.8" fill="none" stroke="#DB5C5C" stroke-width="1.7" />
<circle cx="811.5" cy="601.5" r="5.2" fill="#4A2C2C" stroke="#DB5C5C" stroke-width="1.7" />
<circle cx="846" cy="598.3" r="6.5" fill="none" stroke="#DB5C5C" stroke-width="1.7" />
<path d="M838 606.5 L854 590" stroke="#A8ABB0" stroke-width="1.6" fill="none" stroke-linecap="round" stroke-linejoin="round" />
<circle cx="879" cy="590.8" r="1.6" fill="#CED0D6" stroke="none" stroke-width="1.5" />
<circle cx="879" cy="597.7" r="1.6" fill="#CED0D6" stroke="none" stroke-width="1.5" />
<circle cx="879" cy="604.6" r="1.6" fill="#CED0D6" stroke="none" stroke-width="1.5" />
<path d="M483.5 641 L488 645.3 L496.5 636.5" stroke="#5FB865" stroke-width="2" fill="none" stroke-linecap="round" stroke-linejoin="round" />
<rect x="1108.5" y="591" width="17.5" height="14.5" rx="2.5" fill="none" stroke="#CED0D6" stroke-width="1.5"/>
<path d="M1112.3 595 L1115.3 597.8 L1112.3 600.6 M1117.0 601.8 L1121.5 601.8" stroke="#CED0D6" stroke-width="1.4" fill="none" stroke-linecap="round" stroke-linejoin="round" />
<rect x="1335.5" y="591" width="17.5" height="14.5" rx="2.5" fill="none" stroke="#CED0D6" stroke-width="1.5"/>
<path d="M1339.3 595 L1342.3 597.8 L1339.3 600.6 M1344.0 601.8 L1348.5 601.8" stroke="#CED0D6" stroke-width="1.4" fill="none" stroke-linecap="round" stroke-linejoin="round" />
<path d="M1440.5 594.5 L1446.0 601 L1451.5 594.5" stroke="#CED0D6" stroke-width="1.6" fill="none" stroke-linecap="round" stroke-linejoin="round" />
<path d="M1460 595.5 L1462 597.5 L1460 599.5 Z" stroke="#A8ABB0" stroke-width="0.5" fill="#A8ABB0" stroke-linecap="round" stroke-linejoin="round" />
<g transform="translate(1432 630)" stroke="#5A5D63" stroke-width="1.3" fill="none" stroke-linecap="round" stroke-linejoin="round"><path d="M5.6 12.4 L22.6 12.4 M18.3 8.2 L22.6 12.4 L18.3 16.7 M9.2 8.5 L14.7 3.3 M10.8 3.3 L14.7 3.3 L14.7 7.3 M9.2 15.7 L14.7 21.1 M10.8 21.1 L14.7 21.1 L14.7 17.2"/><path d="M5.9 44.8 L21.9 44.8 M9.8 41.2 L5.9 44.8 L9.8 48.6 M13.4 41.5 L18.6 36.3 M14.6 36.3 L18.6 36.3 L18.6 40.3 M13.4 48.4 L18.6 53.3 M14.6 53.3 L18.6 53.3 L18.6 49.3"/></g>
<path d="M1443.5 724.5 L1448 728.75 L1443.5 733" stroke="#A8ABB0" stroke-width="1.4" fill="none" stroke-linecap="round" stroke-linejoin="round" />
<path d="M1446 771 L1446 784 M1440.8 776.2 L1446 771 L1451.2 776.2" stroke="#CED0D6" stroke-width="1.6" fill="none" stroke-linecap="round" stroke-linejoin="round" />
<path d="M1446 804.5 L1446 817.5 M1440.8 812.3 L1446 817.5 L1451.2 812.3" stroke="#CED0D6" stroke-width="1.6" fill="none" stroke-linecap="round" stroke-linejoin="round" />
<path d="M1443.5 856.5 L1448 860.75 L1443.5 865" stroke="#A8ABB0" stroke-width="1.4" fill="none" stroke-linecap="round" stroke-linejoin="round" />
<path d="M16.2 593.2 L20.5 593.2 Q23 594 25 593.2 L31 593.2 Q35.5 593.6 37 599.6 Q34.5 596.6 31.2 597 L29.3 598.4 L29.3 613.4 Q29.3 614.3 28.4 614.3 L23.8 614.3 Q22.9 614.3 22.9 613.4 L22.9 598.4 Q21.5 597.6 20.5 598.3 L16.2 598.3 Z" stroke="#CED0D6" stroke-width="1.6" fill="none" stroke-linecap="round" stroke-linejoin="round" />
<rect x="7.2" y="635" width="37.6" height="37.5" fill="#3C3E43" rx="6" />
<path d="M20.5 643.5 L32.5 643.5 L38 653.7 L32.5 664 L20.5 664 L15 653.7 Z" stroke="#CED0D6" stroke-width="1.7" fill="none" stroke-linecap="round" stroke-linejoin="round" />
<path d="M23.3 648.5 L30.5 653.7 L23.3 659 Z" stroke="#CED0D6" stroke-width="1.6" fill="none" stroke-linecap="round" stroke-linejoin="round" />
<path d="M19 693.5 L35 703.5 L19 713.5 Z" stroke="#CED0D6" stroke-width="1.8" fill="none" stroke-linecap="round" stroke-linejoin="round" />
<rect x="15.5" y="744.3" width="21.5" height="18" rx="2.5" fill="none" stroke="#CED0D6" stroke-width="1.7"/>
<path d="M20 749.5 L24 753 L20 756.5 M26 758 L32 758" stroke="#CED0D6" stroke-width="1.6" fill="none" stroke-linecap="round" stroke-linejoin="round" />
<circle cx="26.2" cy="803.3" r="11" fill="none" stroke="#CED0D6" stroke-width="1.7" />
<path d="M26.2 797 L26.2 804.5" stroke="#CED0D6" stroke-width="2.2" fill="none" stroke-linecap="round" stroke-linejoin="round" />
<circle cx="26.2" cy="809" r="1.3" fill="#CED0D6" stroke="none" stroke-width="1.5" />
<circle cx="21" cy="846" r="3.6" fill="none" stroke="#CED0D6" stroke-width="1.7" />
<circle cx="32.5" cy="848.5" r="3.6" fill="none" stroke="#CED0D6" stroke-width="1.7" />
<path d="M21 849.6 L21 864 M21 859 Q21 855 25.5 855 Q32.5 855 32.5 852" stroke="#CED0D6" stroke-width="1.7" fill="none" stroke-linecap="round" stroke-linejoin="round" />
<rect x="19.5" y="894" width="9" height="8.5" rx="2" fill="#25324D" stroke="#548AF7" stroke-width="1.5"/>
<path d="M241.3 893 L246.3 897.25 L241.3 901.5" stroke="#A8ABB0" stroke-width="1.3" fill="none" stroke-linecap="round" stroke-linejoin="round" />
<path d="M297.2 893 L302.2 897.25 L297.2 901.5" stroke="#A8ABB0" stroke-width="1.3" fill="none" stroke-linecap="round" stroke-linejoin="round" />
<path d="M379.2 893 L384.2 897.25 L379.2 901.5" stroke="#A8ABB0" stroke-width="1.3" fill="none" stroke-linecap="round" stroke-linejoin="round" />
<path d="M466.2 893 L471.2 897.25 L466.2 901.5" stroke="#A8ABB0" stroke-width="1.3" fill="none" stroke-linecap="round" stroke-linejoin="round" />
<path d="M529.5 893 L534.5 897.25 L529.5 901.5" stroke="#A8ABB0" stroke-width="1.3" fill="none" stroke-linecap="round" stroke-linejoin="round" />
<path d="M714.5 893 L719.5 897.25 L714.5 901.5" stroke="#A8ABB0" stroke-width="1.3" fill="none" stroke-linecap="round" stroke-linejoin="round" />
<circle cx="557" cy="897" r="8" fill="#25324D" stroke="#4F82DE" stroke-width="1.5" />
<path d="M559.9 894.8 A3.6 3.6 0 1 0 559.9 899.2" stroke="#4F82DE" stroke-width="1.5" fill="none" stroke-linecap="round" stroke-linejoin="round" />
<circle cx="742.2" cy="897" r="8.3" fill="#4D2A2A" stroke="#DB5C5C" stroke-width="1.5" />
<text x="742.2" y="901.2" font-family="'Liberation Sans', sans-serif" font-size="12" fill="#DB5C5C" text-anchor="middle" >m</text>
<rect x="1303.2" y="889" width="8.4" height="8.4" fill="#F25022" />
<rect x="1312.6" y="889" width="8.4" height="8.4" fill="#7FBA00" />
<rect x="1303.2" y="898.4" width="8.4" height="8.4" fill="#00A4EF" />
<rect x="1312.6" y="898.4" width="8.4" height="8.4" fill="#FFB900" />
</g></svg>
</body></html>
